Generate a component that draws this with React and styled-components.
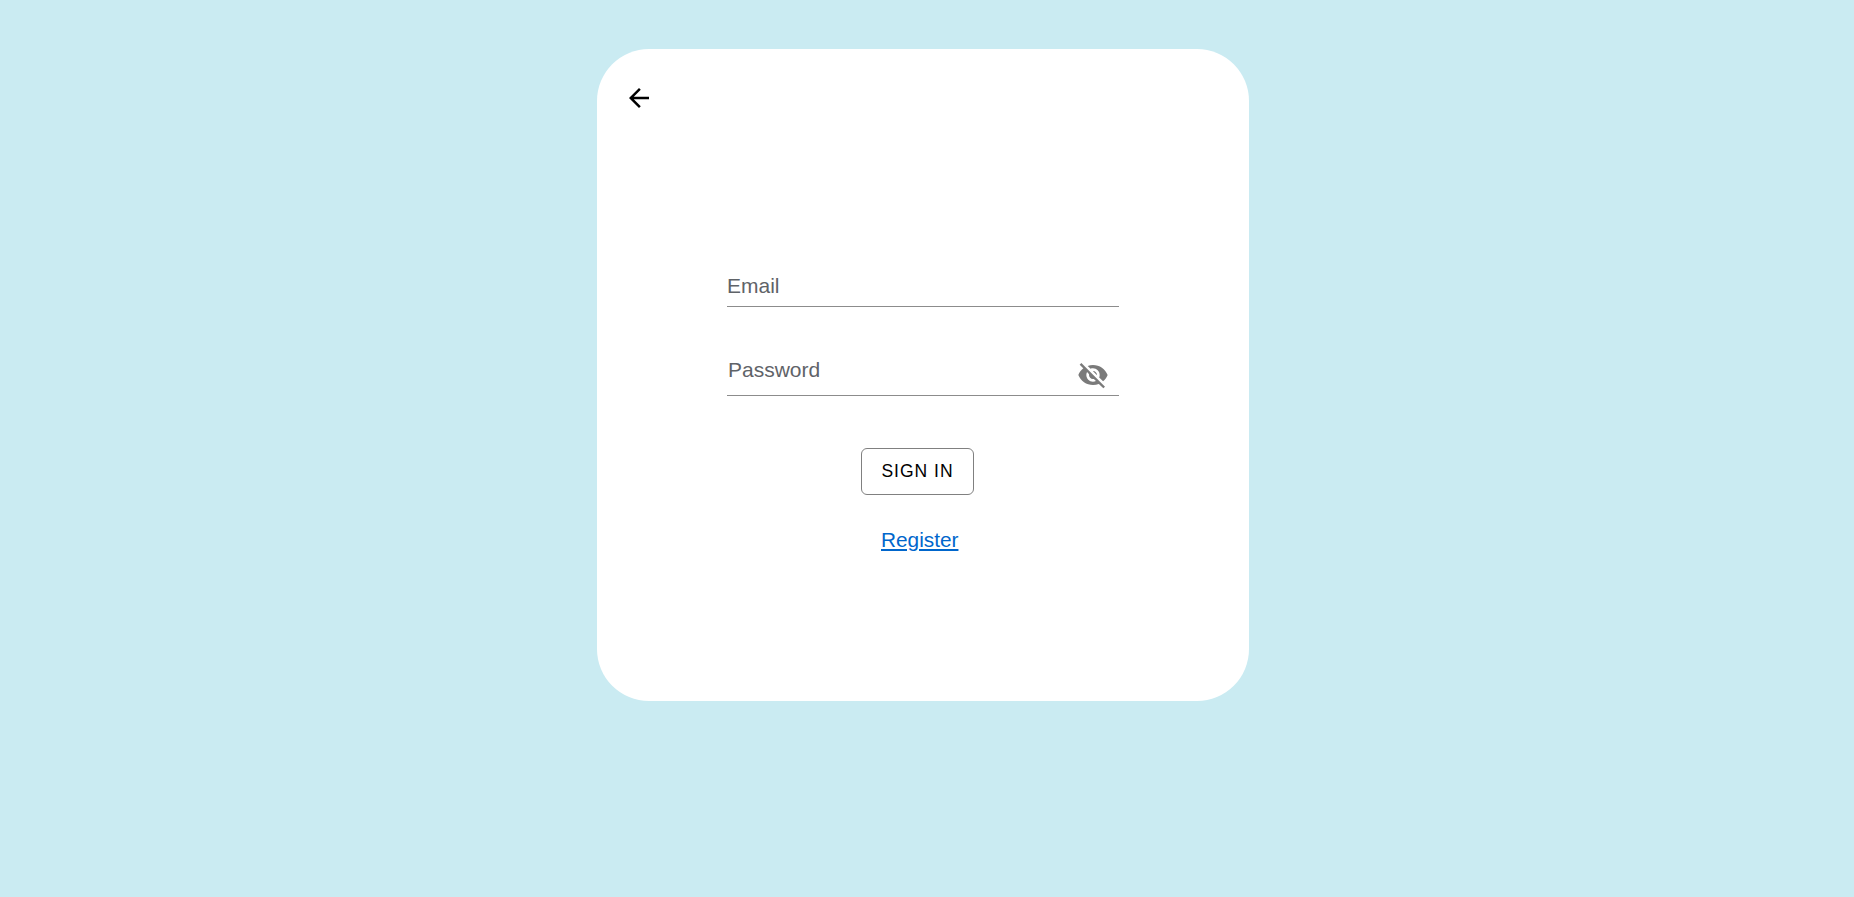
import React from 'react';
import styled, { createGlobalStyle } from 'styled-components';

const GlobalStyle = createGlobalStyle`
    html, body {
        margin: 0;
        height: 100%;
    }
    body {
        background: #caebf2;
        font-family: "Liberation Sans", Arial, sans-serif;
    }
`;

export default function App() {
    return (
        <>
            <GlobalStyle />
            <Page>
                <Card>
                    <BackButton type="button" aria-label="back">
                        <svg width="30" height="30" viewBox="0 0 24 24" fill="currentColor">
                            <path d="M20 11H7.83l5.59-5.59L12 4l-8 8 8 8 1.41-1.41L7.83 13H20v-2z" />
                        </svg>
                    </BackButton>
                    <Form>
                        <Field $height={47}>
                            <Input type="text" placeholder="Email" $pull={12} />
                        </Field>
                        <Field $height={56} $gap={32}>
                            <Input type="password" placeholder="Password" $indent={1} $pull={16} />
                            <EyeIcon width="32" height="32" viewBox="0 0 24 24" fill="currentColor">
                                <path d="M12 7c2.76 0 5 2.24 5 5 0 .65-.13 1.26-.36 1.83l2.92 2.92c1.51-1.26 2.7-2.89 3.43-4.75-1.73-4.39-6-7.5-11-7.5-1.4 0-2.74.25-3.98.7l2.16 2.16C10.74 7.13 11.35 7 12 7zM2 4.27l2.28 2.28.46.46C3.08 8.3 1.78 10.02 1 12c1.73 4.39 6 7.5 11 7.5 1.55 0 3.03-.3 4.38-.84l.42.42L19.73 22 21 20.73 3.27 3 2 4.27zM7.53 9.8l1.55 1.55c-.05.21-.08.43-.08.65 0 1.66 1.34 3 3 3 .22 0 .44-.03.65-.08l1.55 1.55c-.67.33-1.41.53-2.2.53-2.76 0-5-2.24-5-5 0-.79.2-1.53.53-2.2zm4.31-.78l3.15 3.15.02-.16c0-1.66-1.34-3-3-3l-.17.01z" />
                            </EyeIcon>
                        </Field>
                        <Actions>
                            <SignIn type="button">SIGN IN</SignIn>
                            <RegisterLink href="#register">Register</RegisterLink>
                        </Actions>
                    </Form>
                </Card>
            </Page>
        </>
    );
}

const Page = styled.div`
    min-height: 897px;
    padding: 49px 8px 0 0;
    box-sizing: border-box;
    display: flex;
    justify-content: center;
`;

const Card = styled.div`
    width: 652px;
    height: 652px;
    background: #fff;
    border-radius: 52px;
    box-sizing: border-box;
    padding: 34px 0 0 27px;
`;

const BackButton = styled.button`
    display: block;
    width: 30px;
    height: 30px;
    padding: 0;
    border: none;
    background: none;
    color: #000;
    cursor: pointer;
`;

const Form = styled.form`
    width: 392px;
    margin: 146px 0 0 103px;
`;

const Field = styled.div`
    position: relative;
    height: ${props => props.$height}px;
    margin-top: ${props => props.$gap || 0}px;
    border-bottom: 1px solid #8c8c8c;
    display: flex;
    align-items: flex-start;
`;

const Input = styled.input`
    width: 100%;
    height: 30px;
    margin-top: ${props => props.$pull}px;
    padding: 0 40px 0 ${props => props.$indent || 0}px;
    border: none;
    outline: none;
    background: transparent;
    font-family: "Liberation Sans", Arial, sans-serif;
    font-size: 21px;
    color: #333;
    &::placeholder {
        color: #5f6368;
        opacity: 1;
    }
`;

const EyeIcon = styled.svg`
    position: absolute;
    right: 10px;
    bottom: 4px;
    color: #7a7a7a;
`;

const Actions = styled.div`
    display: flex;
    flex-direction: column;
    align-items: flex-start;
    margin-top: 52px;
    padding-left: 134px;
`;

const SignIn = styled.button`
    width: 113px;
    height: 47px;
    box-sizing: border-box;
    background: #fff;
    border: 1px solid #808080;
    border-radius: 6px;
    font-family: "Liberation Sans", Arial, sans-serif;
    font-size: 17.5px;
    letter-spacing: 1px;
    color: #000;
    padding: 0;
    cursor: pointer;
`;

const RegisterLink = styled.a`
    margin: 30px 0 0 20px;
    font-size: 20.8px;
    line-height: 30px;
    color: #0066cc;
    text-decoration: underline;
`;
